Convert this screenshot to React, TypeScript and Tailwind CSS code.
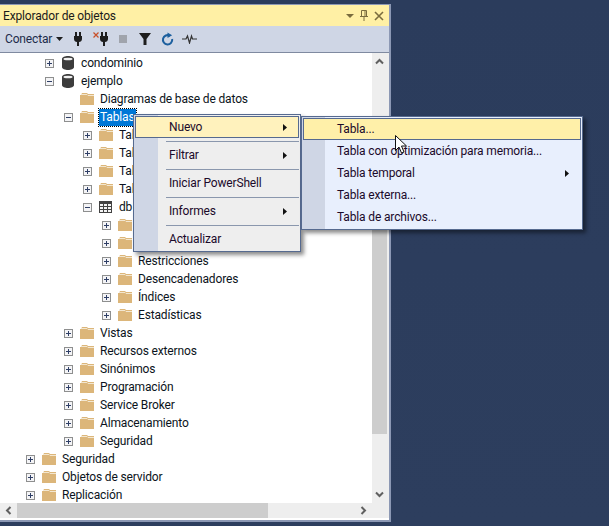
const FONT = "font-['Roboto','Open_Sans',sans-serif] tracking-[-0.15px]"

function Expander({ open }: { open: boolean }) {
  return (
    <svg width="9" height="9" viewBox="0 0 9 9" className="shrink-0">
      <rect x="0.5" y="0.5" width="8" height="8" fill="#f4f4f6" stroke="#8e8f8f" />
      <path d="M2 4.500h5" stroke="#2f3f66" />
      {!open && <path d="M4.500 2v5" stroke="#2f3f66" />}
    </svg>
  )
}

function Folder() {
  return (
    <svg width="14" height="14" viewBox="0 0 14 14" className="shrink-0">
      <path d="M0 3h1l1-2h5l1 1h6v11H0z" fill="#dcb67a" />
      <path d="M1 2.500h6l1 1h6" stroke="#f3e7d0" fill="none" />
    </svg>
  )
}

function Db() {
  return (
    <svg width="12" height="14" viewBox="0 0 12 14" className="shrink-0">
      <path d="M0 3c0-4 12-4 12 0v8c0 4-12 4-12 0z" fill="#3c3c3c" />
      <ellipse cx="6" cy="3" rx="4.600" ry="1.300" fill="#f0f0f0" />
    </svg>
  )
}

function TableIcon() {
  return (
    <svg width="13" height="12" viewBox="0 0 13 12" className="shrink-0">
      <rect width="13" height="12" fill="#424242" />
      <path d="M1 3h3v2H1zM5 3h3v2H5zM9 3h3v2H9zM1 6h3v2H1zM5 6h3v2H5zM9 6h3v2H9zM1 9h3v2H1zM5 9h3v2H5zM9 9h3v2H9z" fill="#f4f4f4" />
    </svg>
  )
}

type Row = {
  label?: string
  depth: number
  open?: boolean
  leaf?: boolean
  icon?: 'db' | 'table'
  selected?: boolean
}

// only what stays visible next to the context menu gets a label
const rows: Row[] = [
  { label: 'condominio', depth: 1, icon: 'db' },
  { label: 'ejemplo', depth: 1, open: true, icon: 'db' },
  { label: 'Diagramas de base de datos', depth: 2, leaf: true },
  { label: 'Tablas', depth: 2, open: true, selected: true },
  { label: 'Tal', depth: 3 },
  { label: 'Tal', depth: 3 },
  { label: 'Tal', depth: 3 },
  { label: 'Tal', depth: 3 },
  { label: 'db', depth: 3, open: true, icon: 'table' },
  { depth: 4 },
  { depth: 4 },
  { label: 'Restricciones', depth: 4 },
  { label: 'Desencadenadores', depth: 4 },
  { label: 'Índices', depth: 4 },
  { label: 'Estadísticas', depth: 4 },
  { label: 'Vistas', depth: 2 },
  { label: 'Recursos externos', depth: 2 },
  { label: 'Sinónimos', depth: 2 },
  { label: 'Programación', depth: 2 },
  { label: 'Service Broker', depth: 2 },
  { label: 'Almacenamiento', depth: 2 },
  { label: 'Seguridad', depth: 2 },
  { label: 'Seguridad', depth: 0 },
  { label: 'Objetos de servidor', depth: 0 },
  { label: 'Replicación', depth: 0 },
]

const indent = ['pl-[26px]', 'pl-[45px]', 'pl-[64px]', 'pl-[83px]', 'pl-[102px]']

function TreeRow({ row }: { row: Row }) {
  return (
    <div className={`flex h-[18px] shrink-0 items-center ${indent[row.depth]}`}>
      <div className="w-[9px] shrink-0">{!row.leaf && <Expander open={!!row.open} />}</div>
      <div className="ml-[6px] flex w-[15px] shrink-0 justify-center">
        {row.icon === 'db' ? <Db /> : row.icon === 'table' ? <TableIcon /> : <Folder />}
      </div>
      {row.label && (
        <span
          className={`ml-[5px] whitespace-nowrap px-[1px] text-[12px] leading-[17px] ${
            row.selected ? 'bg-[#0078d7] text-white outline-1 outline-dotted outline-black' : 'text-[#0b1320]'
          }`}
        >
          {row.label}
        </span>
      )}
    </div>
  )
}

function Arrow() {
  return (
    <svg width="4" height="7" viewBox="0 0 4 7">
      <path d="M0 0l4 3.500L0 7z" fill="#111" />
    </svg>
  )
}

function Chevron({ dir }: { dir: 'up' | 'down' | 'left' | 'right' }) {
  const rot = { up: 'rotate-0', down: 'rotate-180', left: '-rotate-90', right: 'rotate-90' }[dir]
  return (
    <svg width="9" height="7" viewBox="0 0 9 7" className={rot}>
      <path d="M1 5.500l3.500-3.500 3.500 3.500" fill="none" stroke="#606060" strokeWidth="2" />
    </svg>
  )
}

function Plug() {
  return (
    <svg width="8" height="14" viewBox="0 0 8 14" className="shrink-0">
      <path d="M1 0h2v4H1zM5 0h2v4H5zM0 4h8v3c0 2-1.500 3-3 3v4H3v-4c-1.500 0-3-1-3-3z" fill="#1e1e1e" />
    </svg>
  )
}

function MenuSep() {
  return <div className="mb-[2px] ml-[31px] mt-[3px] h-px bg-[#8a97ad]" />
}

function App() {
  return (
    <div className={`${FONT} relative h-[526px] w-[609px] overflow-hidden bg-gradient-to-b from-[#2b3c5c] to-[#2d3e5e] text-[12px]`}>
      <div className="h-[4px]" />
      <div className="flex h-[518px] w-[391px] flex-col border-b-2 border-r-2 border-t border-[#8c98b4]">
        {/* Title bar */}
        <div className="flex h-[21px] shrink-0 items-center justify-between bg-[#fff0a5] pl-[3px] pr-[5px] text-[#1a1a1a]">
          <span>Explorador de objetos</span>
          <div className="flex items-center gap-[6px]">
            <svg width="8" height="4" viewBox="0 0 8 4"><path d="M0 0h8L4 4z" fill="#7a6c3e" /></svg>
            <svg width="8" height="11" viewBox="0 0 8 11"><path d="M1.500.5h5v6h-5zM0 6.500h8M4 7v4M5 1v5" fill="none" stroke="#7a6c3e" /></svg>
            <svg width="10" height="10" viewBox="0 0 10 10"><path d="M1 1l8 8M9 1l-8 8" stroke="#7a6c3e" strokeWidth="1.600" /></svg>
          </div>
        </div>
        {/* Toolbar */}
        <div className="flex h-[27px] shrink-0 items-center border-b border-[#7f8aa0] bg-[#cfd6e5] pl-[5px]">
          <span className="w-[49px] text-[#1c2b4a]">Conectar</span>
          <svg width="7" height="4" viewBox="0 0 7 4" className="ml-[2px]"><path d="M0 0h7L3.500 4z" fill="#1e1e1e" /></svg>
          <div className="ml-[11px] flex"><Plug /></div>
          <svg width="6" height="6" viewBox="0 0 6 6" className="ml-[11px] mb-[8px]"><path d="M.5.5l5 5M5.500.5l-5 5" stroke="#c8502a" strokeWidth="1.200" /></svg>
          <div className="ml-[1px] flex"><Plug /></div>
          <div className="ml-[11px] h-[8px] w-[8px] bg-[#a0a4ac]" />
          <svg width="12" height="12" viewBox="0 0 12 12" className="ml-[12px]"><path d="M0 0h12L7.500 6v6h-3V6z" fill="#1e1e1e" /></svg>
          <svg width="13" height="14" viewBox="0 0 14 14" className="ml-[10px]">
            <path d="M9.500 3.500A5 5 0 1 0 12 7" fill="none" stroke="#1c5f9e" strokeWidth="2.200" />
            <path d="M7 0l5 3-5 3z" fill="#1c5f9e" />
          </svg>
          <svg width="15" height="10" viewBox="0 0 15 10" className="ml-[8px]">
            <path d="M0 5h4l1.500-3 2 7 2-7 1 3h4.500" fill="none" stroke="#333" strokeWidth="1.200" />
          </svg>
        </div>
        {/* Tree + scrollbars */}
        <div className="flex min-h-0 flex-1 bg-white">
          <div className="flex min-w-0 flex-1 flex-col overflow-hidden pt-[1px]">
            {rows.map((row, i) => <TreeRow key={i} row={row} />)}
          </div>
          <div className="flex w-[17px] shrink-0 flex-col bg-[#eeeeee]">
            <div className="flex h-[17px] w-[15px] items-center justify-center"><Chevron dir="up" /></div>
            <div className="h-[55px]" />
            <div className="h-[309px] w-[15px] bg-[#cdcdcd]" />
            <div className="flex-1" />
            <div className="flex h-[17px] w-[15px] items-center justify-center"><Chevron dir="down" /></div>
          </div>
        </div>
        <div className="flex h-[17px] shrink-0 border-b-2 border-white bg-[#eeeeee]">
          <div className="flex w-[17px] items-center justify-center"><Chevron dir="left" /></div>
          <div className="w-[251px] bg-[#cdcdcd]" />
          <div className="flex-1" />
          <div className="flex w-[34px] items-center justify-start pl-[4px]"><Chevron dir="right" /></div>
        </div>
      </div>

      {/* Context menu */}
      <div className="absolute left-[133px] top-[114px] w-[168px] border border-[#566a8f] bg-[#eeeeee] text-[#1b0a2a] shadow-[3px_3px_4px_rgba(0,0,0,0.45)]">
        <div className="absolute bottom-0 left-0 top-0 w-[24px] bg-[#cfd6e5]" />
        <div className="relative flex flex-col p-[1px]">
          <div className="flex h-[22px] items-center justify-between border border-[#566a8f] bg-[#fff2bd] pl-[33px] pr-[11px]"><span>Nuevo</span><Arrow /></div>
          <MenuSep />
          <div className="flex h-[22px] items-center justify-between pl-[34px] pr-[12px]"><span>Filtrar</span><Arrow /></div>
          <MenuSep />
          <div className="flex h-[22px] items-center pl-[34px]"><span>Iniciar PowerShell</span></div>
          <MenuSep />
          <div className="flex h-[22px] items-center justify-between pl-[34px] pr-[12px]"><span>Informes</span><Arrow /></div>
          <MenuSep />
          <div className="flex h-[22px] items-center pl-[34px]"><span>Actualizar</span></div>
        </div>
      </div>

      {/* Submenu */}
      <div className="absolute left-[301px] top-[116px] w-[282px] border border-[#566a8f] bg-[#e8effd] text-[#1b0a2a] shadow-[3px_3px_4px_rgba(0,0,0,0.45)]">
        <div className="absolute bottom-0 left-0 top-0 w-[23px] bg-[#cfd6e5]" />
        <div className="relative flex flex-col p-[1px]">
          <div className="flex h-[22px] items-center border border-[#566a8f] bg-[#fff0a9] pl-[33px]">Tabla...</div>
          <div className="flex h-[22px] items-center pl-[34px]">Tabla con optimización para memoria...</div>
          <div className="flex h-[22px] items-center justify-between pl-[34px] pr-[12px]"><span>Tabla temporal</span><Arrow /></div>
          <div className="flex h-[22px] items-center pl-[34px]">Tabla externa...</div>
          <div className="flex h-[22px] items-center pl-[34px]">Tabla de archivos...</div>
        </div>
      </div>

      {/* Mouse cursor */}
      <svg width="12" height="20" viewBox="0 0 12 20" className="absolute left-[395px] top-[135px]">
        <path d="M.5.500v15l3.500-3.500 2.500 6 2.500-1-2.500-6h5z" fill="#fff" stroke="#111" />
      </svg>
    </div>
  )
}

export default App
